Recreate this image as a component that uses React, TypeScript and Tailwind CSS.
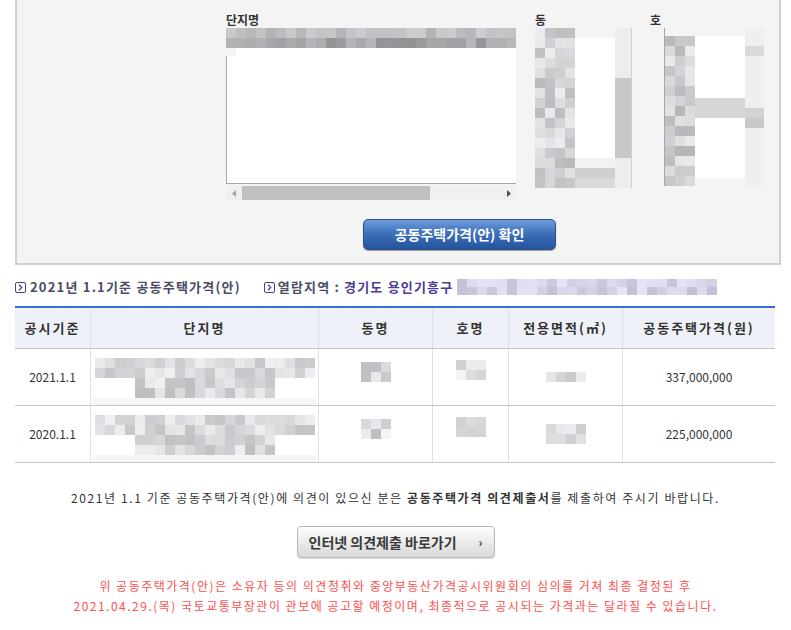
import React from "react";

const FONT = "font-['Noto_Sans_CJK_KR','Noto_Sans',sans-serif]";

function rnd(i: number) {
  const x = Math.sin(i * 12.9898 + 78.233) * 43758.5453;
  return x - Math.floor(x);
}

// pixelated blur block, colours come from a seed
function Mosaic({
  cols,
  rows,
  cw = 10,
  ch = 10,
  seed,
  lo = 170,
  hi = 225,
  tint = "gray",
}: {
  cols: number;
  rows: number;
  cw?: number;
  ch?: number;
  seed: number;
  lo?: number;
  hi?: number;
  tint?: "gray" | "purple";
}) {
  const cells = [];
  for (let r = 0; r < rows; r++) {
    for (let c = 0; c < cols; c++) {
      const v = Math.round(lo + rnd(seed * 97 + r * 31 + c) * (hi - lo));
      const color =
        tint === "purple"
          ? `rgb(${v - 10},${v - 14},${Math.min(255, v + 8)})`
          : `rgb(${v},${v},${v + Math.round(rnd(seed + r + c * 7) * 6)})`;
      cells.push(<div key={r + "-" + c} style={{ backgroundColor: color, width: cw, height: ch }} />);
    }
  }
  return (
    <div className="grid shrink-0" style={{ gridTemplateColumns: `repeat(${cols}, ${cw}px)` }}>
      {cells}
    </div>
  );
}

function BoxArrow() {
  return (
    <svg width="11" height="11" viewBox="0 0 11 11" className="shrink-0">
      <rect x="0.5" y="0.5" width="10" height="10" rx="1.5" fill="#fff" stroke="#4a3c9c" />
      <polyline points="4,2.8 6.8,5.5 4,8.2" fill="none" stroke="#4a3c9c" strokeWidth="1.2" />
    </svg>
  );
}

function ScrollArrow({ dir }: { dir: "l" | "r" }) {
  return (
    <svg width="5" height="7" viewBox="0 0 5 7">
      {dir === "l" ? <polygon points="4,0 4,7 0,3.5" fill="#a0a0a0" /> : <polygon points="1,0 1,7 5,3.5" fill="#505050" />}
    </svg>
  );
}

const headers = ["공시기준", "단지명", "동명", "호명", "전용면적(㎡)", "공동주택가격(원)"];
const widths = ["w-[75px]", "w-[228px]", "w-[114px]", "w-[76px]", "w-[114px]", "w-[153px]"];

const rows = [
  { date: "2021.1.1", price: "337,000,000", seed: 3 },
  { date: "2020.1.1", price: "225,000,000", seed: 11 },
];

export default function App() {
  return (
    <div className={`w-[791px] h-[630px] bg-white overflow-hidden ${FONT} text-[#333]`}>
      {/* search panel */}
      <div className="ml-[15px] w-[766px] h-[265px] border-2 border-t-0 border-[#cfcfcf] bg-[#f4f4f4] flex flex-col">
        <div className="flex items-start pt-[11px] pl-[209px]">
          <div className="w-[290px]">
            <div className="text-[12px] leading-[17px] font-semibold text-[#333]">단지명</div>
            <div className="h-[156px] bg-white border-b border-[#a8a8a8]">
              <Mosaic cols={29} rows={1} seed={1} lo={178} hi={205} />
              <Mosaic cols={29} rows={1} seed={2} lo={145} hi={185} />
              <div className="w-[10px] h-[8px] bg-[#f4f4f4]" />
              <div className="h-[127px] border-l border-[#a8a8a8]" />
            </div>
            <div className="mt-[2px] h-[14px] bg-[#f0f0f0] flex items-center">
              <div className="w-[16px] flex justify-center"><ScrollArrow dir="l" /></div>
              <div className="w-[188px] h-[14px] bg-[#c0c0c0]" />
              <div className="flex-1" />
              <div className="w-[16px] flex justify-center"><ScrollArrow dir="r" /></div>
            </div>
          </div>

          <div className="ml-[19px] w-[97px]">
            <div className="text-[12px] leading-[17px] font-semibold">동</div>
            <div className="flex h-[160px]">
              <Mosaic cols={4} rows={16} seed={5} lo={185} hi={238} />
              <div className="w-[40px] flex flex-col">
                <div className="h-[10px] bg-[#f4f4f4]" />
                <div className="h-[120px] bg-white" />
                <div className="h-[10px] bg-[#f2f2f2]" />
                <div className="h-[10px] bg-[#cfcfcf]" />
                <div className="h-[10px] bg-[#dadada]" />
              </div>
              <div className="w-[17px] flex flex-col bg-[#ededed] border-r border-[#cfcfcf]">
                <div className="h-[50px]" />
                <div className="h-[80px] bg-[#c8c8c8]" />
              </div>
            </div>
          </div>

          <div className="ml-[18px] w-[114px]">
            <div className="text-[12px] leading-[17px] font-semibold">호</div>
            <div className="ml-[14px] flex h-[158px] border-l border-[#a8a8a8]">
              <div className="flex flex-col">
                <div className="h-[8px] bg-[#f4f4f4]" />
                <Mosaic cols={3} rows={15} seed={8} lo={180} hi={238} />
              </div>
              <div className="w-[51px] flex flex-col">
                <div className="h-[8px] bg-[#f4f4f4]" />
                <div className="h-[62px] bg-white" />
                <div className="h-[20px] bg-[#d6d6d6]" />
                <div className="h-[60px] bg-white" />
                <div className="h-[8px] bg-[#f4f4f4]" />
              </div>
              <div className="w-[19px] bg-[#efefef] flex flex-col">
                <div className="h-[18px]" />
                <div className="h-[10px] bg-[#dadada]" />
                <div className="h-[52px]" />
                <div className="h-[10px] bg-[#d2d2d2]" />
                <div className="h-[10px] bg-[#c8c8c8]" />
              </div>
            </div>
          </div>
        </div>

        <div className="mt-[19px] ml-[346px]">
          <button className="w-[193px] h-[31px] rounded-[5px] border border-[#2c4f88] bg-linear-to-b from-[#6d9ddb] via-[#3b6db8] to-[#24549c] text-white text-[14px] font-bold shadow-[0_1px_1px_rgba(0,0,0,0.35)]">
            공동주택가격(안) 확인
          </button>
        </div>
      </div>

      {/* summary line */}
      <div className="mt-[13px] ml-[15px] flex items-center h-[18px] text-[13px] font-bold tracking-[1.2px]">
        <BoxArrow />
        <span className="ml-[4px] text-[#4b4b68]">2021년 1.1기준 공동주택가격(안)</span>
        <span className="ml-[23px]"><BoxArrow /></span>
        <span className="ml-[3px] text-[#4b4b68]">열람지역 :</span>
        <span className="ml-[4px] text-[#4f3a98]">경기도 용인기흥구</span>
        <span className="ml-[4px] flex flex-col">
          <Mosaic cols={26} rows={2} cw={10} ch={8} seed={21} lo={205} hi={242} tint="purple" />
        </span>
      </div>

      {/* result table */}
      <div className="mt-[10px] ml-[15px] w-[760px] border-t-2 border-[#3b6bd6]">
        <div className="flex h-[41px] bg-[#eef2f8] border-b border-[#c6c6c6]">
          {headers.map((h, i) => (
            <div
              key={h}
              className={`${widths[i]} flex items-center justify-center text-[13px] font-bold tracking-[2px] text-[#333] ${i > 0 ? "border-l border-[#dbe1ea]" : ""}`}
            >
              {h}
            </div>
          ))}
        </div>
        {rows.map((r) => (
          <div key={r.date} className="flex h-[57px] border-b border-[#c6c6c6]">
            <div className="w-[75px] flex items-center justify-center text-[12px]">{r.date}</div>
            <div className="w-[228px] border-l border-[#dbe1ea] flex flex-col items-center pt-[9px]">
              <Mosaic cols={22} rows={2} seed={r.seed} lo={195} hi={240} />
              <Mosaic cols={14} rows={2} seed={r.seed + 40} lo={190} hi={240} />
              <div className="w-[225px] h-[10px] bg-[#f6f6f6]" />
            </div>
            <div className="w-[114px] border-l border-[#dbe1ea] flex flex-col items-center pt-[13px]">
              <Mosaic cols={3} rows={2} seed={r.seed + 60} lo={190} hi={248} />
            </div>
            <div className="w-[76px] border-l border-[#dbe1ea] flex flex-col items-center pt-[11px]">
              <Mosaic cols={3} rows={2} seed={r.seed + 70} lo={205} hi={248} />
            </div>
            <div className="w-[114px] border-l border-[#dbe1ea] flex flex-col items-center justify-center">
              <Mosaic cols={4} rows={r.seed === 3 ? 1 : 2} seed={r.seed + 80} lo={200} hi={235} />
            </div>
            <div className="w-[153px] border-l border-[#dbe1ea] flex items-center justify-center text-[12px]">
              {r.price}
            </div>
          </div>
        ))}
      </div>

      {/* notice */}
      <p className="mt-[26px] text-center text-[12px] tracking-[1.6px] text-[#333]">
        2021년 1.1 기준 공동주택가격(안)에 의견이 있으신 분은{" "}
        <b className="text-[#333]">공동주택가격 의견제출서</b>를 제출하여 주시기 바랍니다.
      </p>

      <div className="mt-[19px] flex justify-center">
        <button className="w-[198px] h-[32px] rounded-[4px] border border-[#b9b9b9] bg-linear-to-b from-[#ffffff] to-[#d8d8d8] flex items-center justify-center gap-[22px] text-[14px] font-bold text-[#3a3a3a] shadow-[0_1px_1px_rgba(0,0,0,0.15)]">
          <span>인터넷 의견제출 바로가기</span>
          <span className="text-[12px]">›</span>
        </button>
      </div>

      <div className="mt-[18px] text-center text-[12px] leading-[20px] tracking-[1.5px] text-[#ff5050]">
        <p>위 공동주택가격(안)은 소유자 등의 의견청취와 중앙부동산가격공시위원회의 심의를 거쳐 최종 결정된 후</p>
        <p>2021.04.29.(목) 국토교통부장관이 관보에 공고할 예정이며, 최종적으로 공시되는 가격과는 달라질 수 있습니다.</p>
      </div>
    </div>
  );
}
